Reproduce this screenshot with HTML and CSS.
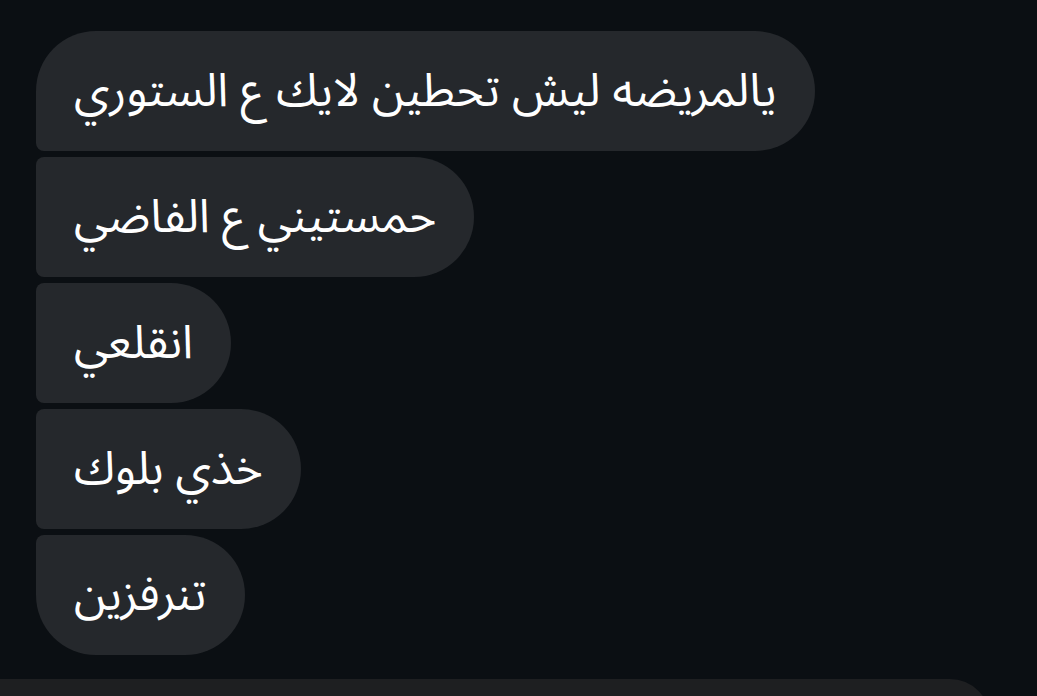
FILE: index.html
```html
<!DOCTYPE html>
<html lang="ar">
<head>
  <meta charset="UTF-8" />
  <meta name="viewport" content="width=device-width, initial-scale=1.0" />
  <title>Chat</title>
  <link rel="stylesheet" href="styles.css">
</head>
<body>
  <div class="thread">
    <div class="bubble first" dir="rtl">يالمريضه ليش تحطين لايك ع الستوري</div>
    <div class="bubble" dir="rtl">حمستيني ع الفاضي</div>
    <div class="bubble" dir="rtl">انقلعي</div>
    <div class="bubble" dir="rtl">خذي بلوك</div>
    <div class="bubble last" dir="rtl">تنرفزين</div>
  </div>
  <div class="composer"></div>
</body>
</html>
```

FILE: styles.css
```css
body {
  margin: 0;
  padding: 0;
  background: #0b0f13;
  color: #fff;
  font-family: "Noto Sans Arabic", "DejaVu Sans", sans-serif;
  height: 696px;
  overflow: hidden;
}
.thread {
  display: flex;
  flex-direction: column;
  align-items: flex-start;
  gap: 6px;
  padding: 31px 0 0 36px;
}
.bubble {
  background: #25282c;
  height: 120px;
  line-height: 120px;
  padding: 0 38px;
  font-size: 46.5px;
  white-space: nowrap;
  border-radius: 8px 60px 60px 8px;
}
.bubble.first {
  border-top-left-radius: 60px;
}
.bubble.last {
  border-bottom-left-radius: 60px;
}
.composer {
  margin-top: 24px;
  width: 990px;
  height: 40px;
  background: #1e1f21;
  border-top-right-radius: 44px;
}
```
